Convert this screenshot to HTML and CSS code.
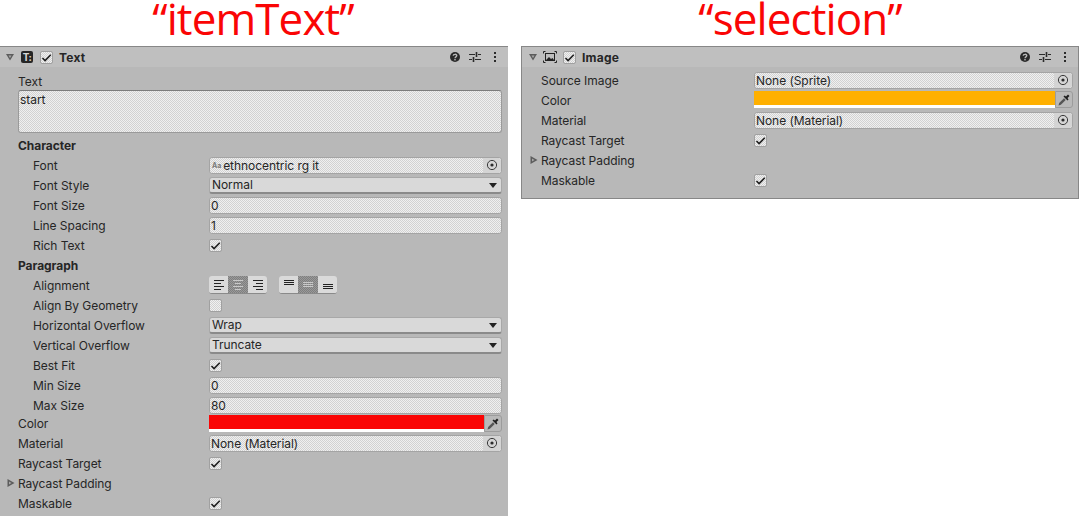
FILE: index.html
```html
<!DOCTYPE html>
<html lang="en">
<head>
    <meta charset="UTF-8">
    <title>itemText and selection</title>
    <link rel="stylesheet" href="styles.css">
</head>
<body>
    <svg class="defs" width="0" height="0">
        <symbol id="fold-open" viewBox="0 0 8 8"><path d="M0 1h8L4 7.500z" fill="#5c5c5c"/><path d="M2.500 2.500h3L4 5z" fill="#a8a8a8"/></symbol>
        <symbol id="fold-closed" viewBox="0 0 8 8"><path d="M.5 0v8L7.500 4z" fill="#5c5c5c"/><path d="M2 2.500v3L4.500 4z" fill="#a8a8a8"/></symbol>
        <symbol id="check" viewBox="0 0 13 13"><path d="M2.500 7l2.600 2.600L10.800 3.800" fill="none" stroke="#1c1c1c" stroke-width="1.5"/></symbol>
        <symbol id="help" viewBox="0 0 12 12"><circle cx="6" cy="6" r="5" fill="#2b2b2b"/><path d="M4.200 4.800C4.200 2.800 7.800 2.800 7.800 4.600 7.800 5.900 6 5.800 6 7.200" fill="none" stroke="#bcbcbc" stroke-width="1.300"/><rect x="5.300" y="8" width="1.400" height="1.400" fill="#bcbcbc"/></symbol>
        <symbol id="sliders" viewBox="0 0 12 12"><path d="M0 3.500h6M9 3.500h3M0 8.500h3M6 8.500h6" stroke="#2b2b2b" stroke-width="1.200"/><path d="M7.500 1v5M4.500 6v5" stroke="#2b2b2b" stroke-width="1.600"/></symbol>
        <symbol id="dots" viewBox="0 0 4 12"><path d="M1 1h2v2H1zM1 5h2v2H1zM1 9h2v2H1z" fill="#2b2b2b"/></symbol>
        <symbol id="picker" viewBox="0 0 12 12"><circle cx="6" cy="6" r="4.600" fill="none" stroke="#3a3a3a" stroke-width="1"/><circle cx="6" cy="6" r="1.600" fill="#2b2b2b"/></symbol>
        <symbol id="dropper" viewBox="0 0 14 14"><path d="M1.500 12.500l.7-2.400 4.800-4.800 1.700 1.700-4.800 4.800z" fill="#555"/><path d="M6.500 3.500l4 4 1-1-1-1.500 2-2-1.500-1.500-2 2-1.500-1z" fill="#1f1f1f"/></symbol>
        <symbol id="al-left" viewBox="0 0 12 12"><path d="M1 1.500h10M1 4.500h7M1 7.500h10M1 10.500h7" stroke="#222" stroke-width="1"/></symbol>
        <symbol id="al-center" viewBox="0 0 12 12"><path d="M1 1.500h10M3 4.500h6M1 7.500h10M3 10.500h6" stroke="#c9c9c9" stroke-width="1"/></symbol>
        <symbol id="al-right" viewBox="0 0 12 12"><path d="M1 1.500h10M4 4.500h7M1 7.500h10M4 10.500h7" stroke="#222" stroke-width="1"/></symbol>
        <symbol id="al-top" viewBox="0 0 12 12"><path d="M1 1.500h10M1 3.500h10M1 5.500h10" stroke="#222" stroke-width="1"/></symbol>
        <symbol id="al-mid" viewBox="0 0 12 12"><path d="M1 3.500h10M1 5.500h10M1 7.500h10" stroke="#c9c9c9" stroke-width="1"/></symbol>
        <symbol id="al-bottom" viewBox="0 0 12 12"><path d="M1 5.500h10M1 7.500h10M1 9.500h10" stroke="#222" stroke-width="1"/></symbol>
    </svg>

    <div class="titles">
        <h1 class="title">“itemText”</h1>
        <h1 class="title">“selection”</h1>
    </div>

    <div class="panels">
        <!-- Text component -->
        <section class="panel panel-text">
            <header class="head">
                <svg class="fold"><use href="#fold-open"/></svg>
                <span class="comp-icon comp-t">T:</span>
                <span class="check"><svg><use href="#check"/></svg></span>
                <span class="comp-name">Text</span>
                <span class="head-tools">
                    <svg class="tool"><use href="#help"/></svg>
                    <svg class="tool"><use href="#sliders"/></svg>
                    <svg class="tool-dots"><use href="#dots"/></svg>
                </span>
            </header>
            <div class="body">
                <div class="row"><span>Text</span></div>
                <div class="textarea">start</div>
                <div class="row"><strong>Character</strong></div>
                <div class="row sub"><span>Font</span><div class="field object"><span class="font-mark">Aa</span><span class="grow">ethnocentric rg it</span><span class="pick"><svg><use href="#picker"/></svg></span></div></div>
                <div class="row sub"><span>Font Style</span><div class="drop">Normal<i class="arrow"></i></div></div>
                <div class="row sub"><span>Font Size</span><div class="field">0</div></div>
                <div class="row sub"><span>Line Spacing</span><div class="field">1</div></div>
                <div class="row sub"><span>Rich Text</span><span class="check"><svg><use href="#check"/></svg></span></div>
                <div class="row"><strong>Paragraph</strong></div>
                <div class="row sub"><span>Alignment</span>
                    <div class="aligns">
                        <div class="btns">
                            <span class="btn"><svg><use href="#al-left"/></svg></span>
                            <span class="btn on"><svg><use href="#al-center"/></svg></span>
                            <span class="btn"><svg><use href="#al-right"/></svg></span>
                        </div>
                        <div class="btns">
                            <span class="btn"><svg><use href="#al-top"/></svg></span>
                            <span class="btn on"><svg><use href="#al-mid"/></svg></span>
                            <span class="btn"><svg><use href="#al-bottom"/></svg></span>
                        </div>
                    </div>
                </div>
                <div class="row sub"><span>Align By Geometry</span><span class="check"></span></div>
                <div class="row sub"><span>Horizontal Overflow</span><div class="drop">Wrap<i class="arrow"></i></div></div>
                <div class="row sub"><span>Vertical Overflow</span><div class="drop">Truncate<i class="arrow"></i></div></div>
                <div class="row sub"><span>Best Fit</span><span class="check"><svg><use href="#check"/></svg></span></div>
                <div class="row sub"><span>Min Size</span><div class="field">0</div></div>
                <div class="row sub"><span>Max Size</span><div class="field">80</div></div>
                <div class="row short"><span>Color</span><div class="color"><span class="swatch red"></span><span class="pick"><svg class="dropper"><use href="#dropper"/></svg></span></div></div>
                <div class="row"><span>Material</span><div class="field object"><span class="grow">None (Material)</span><span class="pick"><svg><use href="#picker"/></svg></span></div></div>
                <div class="row"><span>Raycast Target</span><span class="check"><svg><use href="#check"/></svg></span></div>
                <div class="row"><svg class="fold fold-row"><use href="#fold-closed"/></svg><span>Raycast Padding</span></div>
                <div class="row"><span>Maskable</span><span class="check"><svg><use href="#check"/></svg></span></div>
            </div>
        </section>

        <!-- Image component -->
        <section class="panel panel-image">
            <header class="head">
                <svg class="fold"><use href="#fold-open"/></svg>
                <svg class="comp-icon comp-img" viewBox="0 0 14 12">
                    <path d="M.5 2.500v-2h2M11.500.5h2v2M13.500 9.500v2h-2M2.500 11.500h-2v-2" fill="none" stroke="#222"/>
                    <rect x="2.500" y="2.500" width="9" height="7" fill="none" stroke="#222"/>
                    <path d="M3 9l3-3 2 2 1.500-1L11 9z" fill="#222"/>
                </svg>
                <span class="check"><svg><use href="#check"/></svg></span>
                <span class="comp-name">Image</span>
                <span class="head-tools">
                    <svg class="tool"><use href="#help"/></svg>
                    <svg class="tool"><use href="#sliders"/></svg>
                    <svg class="tool-dots"><use href="#dots"/></svg>
                </span>
            </header>
            <div class="body">
                <div class="row"><span>Source Image</span><div class="field object"><span class="grow">None (Sprite)</span><span class="pick"><svg><use href="#picker"/></svg></span></div></div>
                <div class="row"><span>Color</span><div class="color"><span class="swatch amber"></span><span class="pick"><svg class="dropper"><use href="#dropper"/></svg></span></div></div>
                <div class="row"><span>Material</span><div class="field object"><span class="grow">None (Material)</span><span class="pick"><svg><use href="#picker"/></svg></span></div></div>
                <div class="row"><span>Raycast Target</span><span class="check"><svg><use href="#check"/></svg></span></div>
                <div class="row"><svg class="fold fold-row"><use href="#fold-closed"/></svg><span>Raycast Padding</span></div>
                <div class="row"><span>Maskable</span><span class="check"><svg><use href="#check"/></svg></span></div>
            </div>
        </section>
    </div>
</body>
</html>
```

FILE: styles.css
```css
html, body {
    margin: 0;
    height: 516px;
    overflow: hidden;
    background-color: #fff;
}
body {
    font-family: Inter, "Liberation Sans", sans-serif;
    font-size: 12px;
    letter-spacing: -.06px;
    color: #262626;
}
.defs {
    position: absolute;
}

/* red captions */
.titles {
    display: grid;
    grid-template-columns: 506px 558px;
    gap: 15px;
    height: 46px;
}
.title {
    margin: 0;
    font-family: "Open Sans", sans-serif;
    font-size: 44px;
    font-weight: 400;
    line-height: 36px;
    letter-spacing: -.9px;
    color: #fa0505;
    text-align: center;
}

.panels {
    display: flex;
    gap: 13px;
    height: 470px;
}
.panel {
    background-color: #b8b8b8;
    border-top: 1px solid #878787;
    box-sizing: border-box;
}
.panel-text {
    width: 508px;
    --label: 191px;
    --fold: 6px;
}
.panel-image {
    width: 558px;
    height: 153px;
    border: 1px solid #878787;
    --label: 213px;
    --fold: 7px;
}

.head {
    display: flex;
    align-items: center;
    height: 20px;
    padding-left: var(--fold);
    background-color: #bfbfbf;
}
.fold {
    width: 8px;
    height: 8px;
    flex: none;
}
.fold-row {
    position: absolute;
    margin-left: -11px;
}
.comp-icon {
    margin-left: 7px;
    flex: none;
}
.comp-t {
    width: 12px;
    height: 12px;
    border-radius: 2px;
    background-color: #262626;
    color: #d8d8d8;
    font-size: 10px;
    font-weight: 700;
    line-height: 12px;
    letter-spacing: -.5px;
    text-align: center;
}
.comp-img {
    width: 14px;
    height: 12px;
    margin-left: 6px;
}
.head .check {
    margin-left: 7px;
}
.head .comp-img + .check {
    margin-left: 6px;
}
.comp-name {
    margin-left: 6px;
    font-weight: 700;
    letter-spacing: .2px;
}
.head-tools {
    display: flex;
    align-items: center;
    gap: 8px;
    margin-left: auto;
    padding-right: 10px;
}
.tool {
    width: 12px;
    height: 12px;
}
.tool-dots {
    width: 4px;
    height: 12px;
    margin: 0 1px 0 4px;
}

.body {
    padding: 4px 6px 0 18px;
}
.panel-image .body {
    padding: 3px 5px 0 19px;
}
.row {
    display: flex;
    align-items: center;
    height: 20px;
}
.row.short {
    height: 18px;
}
.row > span:first-child,
.row > .fold + span {
    flex: 0 0 var(--label);
    white-space: nowrap;
}
.row.sub > span:first-child {
    flex-basis: calc(var(--label) - 15px);
    margin-left: 15px;
}
.row strong {
    font-weight: 700;
    white-space: nowrap;
}
.panel-text .short > span:first-child {
    padding-bottom: 2px;
}

/* inputs are dithered in the source picture */
.field, .textarea, .check {
    background-color: #e2e2e2;
    background-image: repeating-conic-gradient(#f0f0f0 0 25%, #d2d2d2 0 50%);
    background-size: 2px 2px;
    box-sizing: border-box;
}
.textarea {
    height: 43px;
    margin: -1px 0 2px;
    padding: 1px 1px 0;
    border: 1px solid #9a9a9a;
    border-top-color: #7c7c7c;
    border-radius: 3px;
}
.field {
    flex: 1;
    display: flex;
    align-items: center;
    height: 17px;
    padding: 0 1px;
    border: 1px solid #a4a4a4;
    border-radius: 3px;
}
.field.object {
    padding-right: 0;
}
.grow {
    flex: 1;
}
.font-mark {
    margin: 0 2px 0 1px;
    color: #7a7a7a;
    font-size: 7px;
    font-weight: 700;
}
.pick {
    display: flex;
    align-items: center;
    justify-content: center;
    flex: none;
    width: 18px;
    height: 100%;
    background-color: #d4d4d4;
    border-radius: 0 3px 3px 0;
}
.pick svg {
    width: 12px;
    height: 12px;
}
.pick .dropper {
    width: 14px;
    height: 14px;
}
.drop {
    flex: 1;
    position: relative;
    box-sizing: border-box;
    height: 17px;
    line-height: 13px;
    padding-left: 2px;
    background-color: #d9d9d9;
    border: 1px solid #a8a8a8;
    border-bottom: 2px solid #8a8a8a;
    border-radius: 3px;
}
.arrow {
    position: absolute;
    right: 4px;
    top: 5px;
    border: 4px solid transparent;
    border-top: 5px solid #222;
    border-bottom: 0;
}
.check {
    display: block;
    flex: none;
    width: 13px;
    height: 13px;
    border: 1px solid #a0a0a0;
    border-radius: 2px;
}
.check svg {
    display: block;
    width: 13px;
    height: 13px;
    margin: -1px;
}
.color {
    flex: 1;
    display: flex;
    align-self: flex-start;
    height: 17px;
}
.panel-image .color {
    margin-top: 1px;
}
.swatch {
    flex: 1;
    box-sizing: border-box;
    border-bottom: 3px solid #fff;
}
.red {
    background-color: #fa0505;
}
.amber {
    background-color: #ffb000;
}
.color .pick {
    background-color: #b9b9b9;
    border: 1px solid #9c9c9c;
    box-sizing: border-box;
}

.aligns {
    display: flex;
    gap: 12px;
}
.btns {
    display: flex;
    border-bottom: 1px solid #8a8a8a;
    border-radius: 3px;
    overflow: hidden;
}
.btn {
    display: flex;
    align-items: center;
    justify-content: center;
    width: 19px;
    height: 17px;
    background-color: #dadada;
}
.btn.on {
    width: 20px;
    background-color: #8c8c8c;
    background-image: repeating-conic-gradient(#999 0 25%, #7f7f7f 0 50%);
    background-size: 2px 2px;
}
.btn svg {
    width: 12px;
    height: 12px;
}
```
